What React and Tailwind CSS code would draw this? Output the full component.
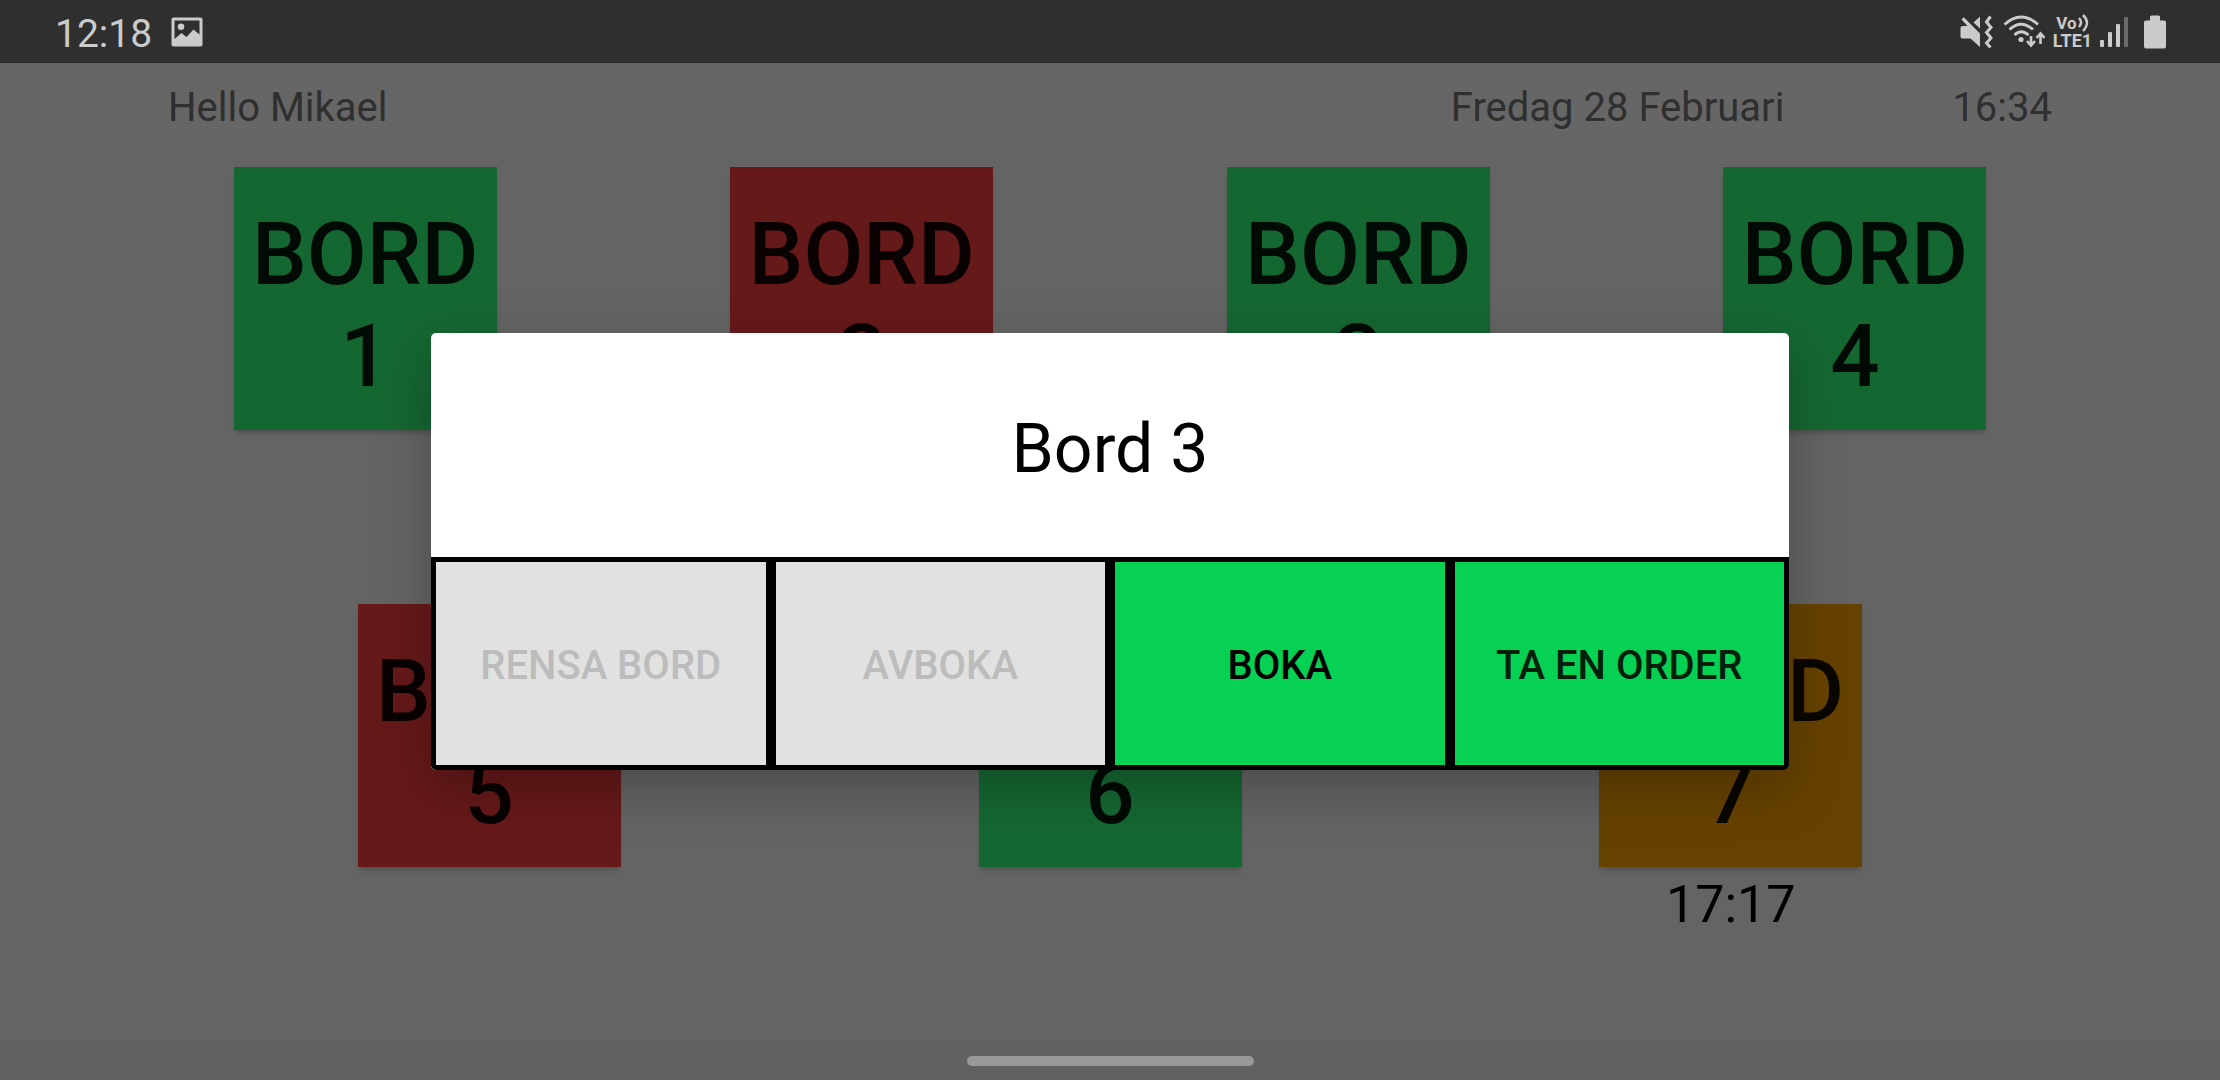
const tone = {
  green: "bg-[#156732]",
  red: "bg-[#661919]",
  amber: "bg-[#664200]",
};

const rows = [
  [
    { n: 1, c: "green" },
    { n: 2, c: "red" },
    { n: 3, c: "green" },
    { n: 4, c: "green" },
  ],
  [
    { n: 5, c: "red" },
    { n: 6, c: "green" },
    { n: 7, c: "amber", time: "17:17" },
  ],
];

const actions = [
  { label: "RENSA BORD", disabled: true },
  { label: "AVBOKA", disabled: true },
  { label: "BOKA", style: "text-black" },
  { label: "TA EN ORDER", style: "text-[#01200c]" },
];

function ImageIcon() {
  return (
    <svg width="32" height="30" viewBox="0 0 32 30" fill="#cbcbcb" aria-hidden="true">
      <path fillRule="evenodd" d="M2.5 0.5h27a2 2 0 0 1 2 2v25a2 2 0 0 1-2 2h-27a2 2 0 0 1-2-2v-25a2 2 0 0 1 2-2zM3.500 3.500v18.500L10.500 16l5 4L22.500 12.500l6 5V3.500z" />
      <circle cx="10" cy="9.800" r="3.300" />
    </svg>
  );
}

function StatusIcons() {
  return (
    <div className="flex items-center text-[#cbcbcb]">
      <svg width="34" height="34" viewBox="0 0 34 34" fill="currentColor" aria-hidden="true">
        <path d="M0.500 13Q0.500 11 2.500 11H7.500L1.500 4.500 3.800 2.200 20 18.500V32L10.500 23.500H2.500Q0.500 23.500 0.500 21.500z" />
        <path d="M20 1.500V13.500L13.500 7.500z" />
        <path d="M30.500 1.500L26.500 7L31 12.500L26.500 17.500L31 23L26.500 28L30.500 32.500" fill="none" stroke="currentColor" strokeWidth="3" />
      </svg>
      <svg className="ml-[9px]" width="42" height="34" viewBox="0 0 42 34" fill="none" stroke="currentColor" strokeWidth="2.900" aria-hidden="true">
        <path d="M1.500 9.500Q18 -5.500 35 9.500M6.500 14.500Q18 4 30 14.500M11.500 20Q18 13.500 25.500 20" />
        <circle cx="18" cy="24.500" r="2.600" fill="currentColor" stroke="none" />
        <path d="M28 21V30.500M24 26l4 4.500 4-4.500M37.500 29V18.500M33.500 23l4-4.500 4 4.500" strokeWidth="2.600" />
      </svg>
      <div className="ml-[8px] flex h-[34px] w-[39px] flex-col items-center font-bold leading-[17px]">
        <span className="flex h-[17px] items-center gap-px text-[17px]">
          Vo
          <svg width="11" height="18" viewBox="0 0 11 18" fill="none" stroke="currentColor" strokeWidth="2.400" aria-hidden="true">
            <path d="M1 4Q5 8.500 1 13M5 1Q13 8.500 5 17" />
          </svg>
        </span>
        <span className="text-[18px]">LTE1</span>
      </div>
      <svg className="ml-[8px]" width="28" height="34" viewBox="0 0 28 34" fill="currentColor" aria-hidden="true">
        <rect x="0" y="25" width="4" height="7" rx="1" />
        <rect x="8" y="17" width="4" height="15" rx="1" />
        <rect x="16" y="9" width="4" height="23" rx="1" />
        <rect x="24" y="2" width="4" height="30" rx="1" fill="#6b6b6b" />
      </svg>
      <svg className="ml-[16px]" width="22" height="34" viewBox="0 0 22 34" fill="currentColor" aria-hidden="true">
        <path d="M7.500 0.500h7q1.500 0 1.500 1.500v3.500h4q2 0 2 2v24q0 2-2 2H2q-2 0-2-2v-24q0-2 2-2h4V2q0-1.500 1.500-1.500z" />
      </svg>
    </div>
  );
}

function TableTile({ n, c, time }) {
  return (
    <div className="flex flex-col items-center">
      <button
        type="button"
        className={`flex size-[263px] items-center justify-center pt-[12px] text-center text-[87px] font-medium leading-[102px] text-black/90 shadow-[0_5px_5px_-2px_rgba(0,0,0,0.2)] ${tone[c]}`}
      >
        BORD
        <br />
        {n}
      </button>
      {time && <time className="mt-[8px] text-[52px] leading-[60px] text-black">{time}</time>}
    </div>
  );
}

export default function App() {
  return (
    <div className="relative flex min-h-screen flex-col bg-[#646464] font-[Roboto,sans-serif]">
      <div className="flex h-[63px] items-center justify-between bg-[#2f2f2f] pr-[54px] pl-[55px]">
        <div className="flex items-center gap-[19px] text-[#cbcbcb]">
          <span className="pt-[4px] text-[39px] leading-[46px]">12:18</span>
          <ImageIcon />
        </div>
        <StatusIcons />
      </div>
      <header className="flex h-[84px] items-center bg-[#666666] px-[168px] pt-[6px] text-[40px] leading-[48px] text-[#2f2f2f]">
        <span>Hello Mikael</span>
        <span className="ml-auto">Fredag 28 Februari</span>
        <time className="ml-[168px]">16:34</time>
      </header>
      <main className="flex grow flex-col gap-[174px] pt-[20px]">
        {rows.map((row) => (
          <div key={row[0].n} className="flex items-start justify-evenly">
            {row.map((t) => (
              <TableTile key={t.n} {...t} />
            ))}
          </div>
        ))}
      </main>
      <div className="flex h-[39px] items-center justify-center bg-[#616161]">
        <div className="h-[10px] w-[287px] rounded-full bg-[#999999]" />
      </div>

      <div className="absolute inset-0 flex items-center justify-center pt-[23px]">
        <div
          role="dialog"
          aria-labelledby="dialog-title"
          className="flex w-[1358px] max-w-full flex-col overflow-hidden rounded-[5px] bg-white shadow-[0_18px_54px_rgba(0,0,0,0.25)]"
        >
          <h1 id="dialog-title" className="pt-[76px] pb-[68px] text-center text-[68px] leading-[80px] text-black">
            Bord 3
          </h1>
          <div className="grid grid-cols-4">
            {actions.map((a) => (
              <button
                key={a.label}
                type="button"
                disabled={a.disabled}
                className={`h-[213px] border-[5px] border-black pt-[4px] text-[40px] font-medium leading-[48px] ${
                  a.disabled ? "bg-[#e1e1e1] text-[#bcbcbc]" : `bg-[#06d152] ${a.style}`
                }`}
              >
                {a.label}
              </button>
            ))}
          </div>
        </div>
      </div>
    </div>
  );
}
